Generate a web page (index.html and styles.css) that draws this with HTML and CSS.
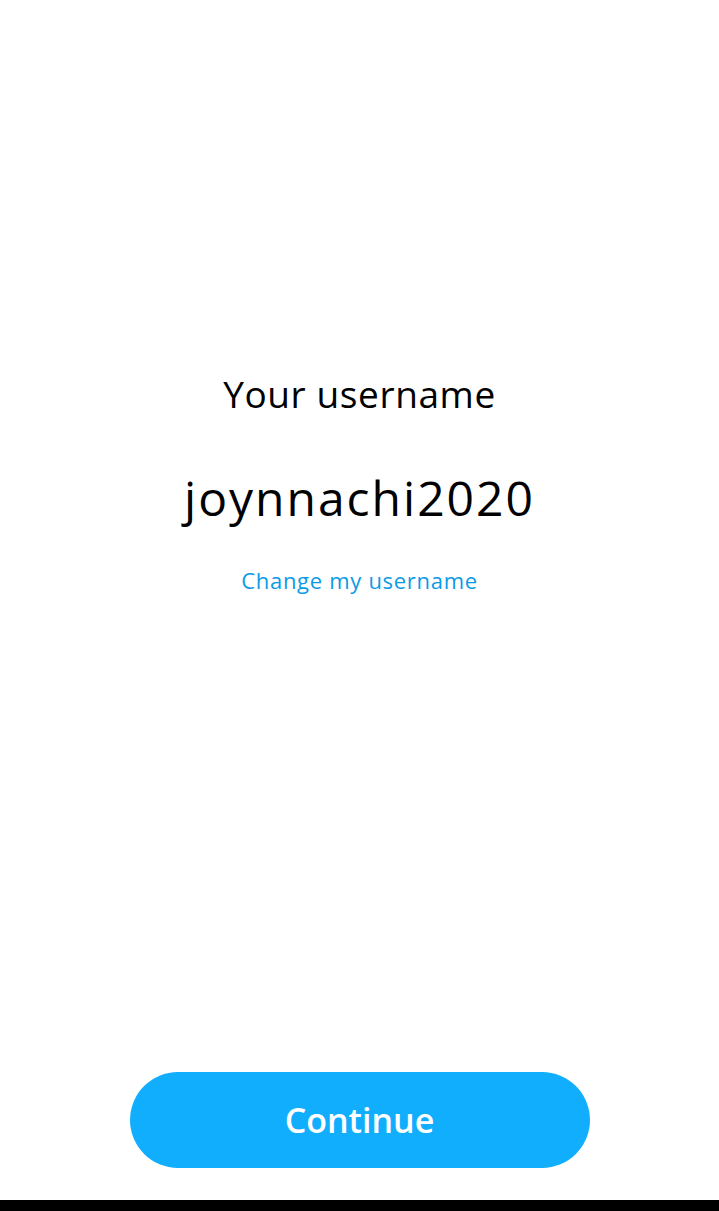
FILE: index.html
```html
<!DOCTYPE html>
<html lang="en">
<head>
<meta charset="utf-8">
<title>Your username</title>
<link rel="stylesheet" href="styles.css">
</head>
<body>
<div class="screen">
  <main class="content">
    <h1 class="title">Your username</h1>
    <p class="username">joynnachi2020</p>
    <a class="change-link" href="#">Change my username</a>
  </main>
  <div class="actions">
    <button class="continue" type="button">Continue</button>
  </div>
  <div class="home-bar"></div>
</div>
</body>
</html>
```

FILE: styles.css
```css
* { box-sizing: border-box; }
html, body {
  margin: 0;
  padding: 0;
  background: #ffffff;
}
body {
  font-family: "Open Sans", "Noto Sans", "Liberation Sans", sans-serif;
  color: #000000;
}
.screen {
  height: 1211px;
  display: flex;
  flex-direction: column;
}
.content {
  flex: 1;
  display: flex;
  flex-direction: column;
  align-items: center;
  padding-top: 370px;
}
.title {
  margin: 0;
  font-size: 37px;
  line-height: 48px;
  font-weight: 400;
  letter-spacing: 0.6px;
}
.username {
  margin: 52px 0 0;
  font-size: 48px;
  line-height: 56px;
  font-weight: 400;
  letter-spacing: 2px;
}
.change-link {
  margin-top: 40px;
  font-size: 22px;
  line-height: 28px;
  font-weight: 500;
  letter-spacing: 0.7px;
  color: #0a9be6;
  text-decoration: none;
}
.actions {
  display: flex;
  justify-content: center;
  padding-bottom: 32px;
}
.continue {
  width: 460px;
  height: 96px;
  border: none;
  border-radius: 48px;
  background: #12aefe;
  color: #ffffff;
  font-family: inherit;
  font-size: 34px;
  font-weight: 600;
  cursor: pointer;
}
.home-bar {
  height: 11px;
  background: #000000;
}
```
